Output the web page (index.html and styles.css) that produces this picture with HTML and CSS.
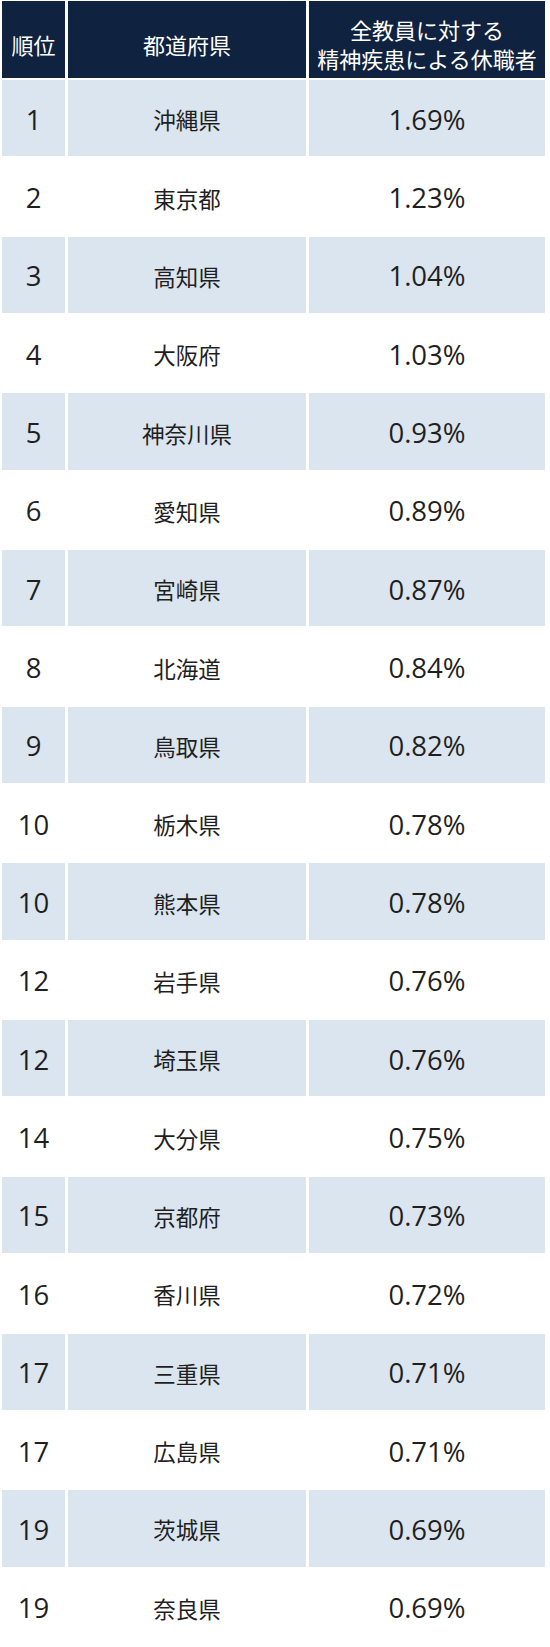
FILE: index.html
```html
<!DOCTYPE html>
<html lang="ja">
<head>
<meta charset="utf-8">
<title>精神疾患による休職者</title>
<link rel="stylesheet" href="styles.css">
</head>
<body>
<div class="table">
  <div class="row head">
    <div class="cell">順位</div>
    <div class="cell">都道府県</div>
    <div class="cell">全教員に対する<br>精神疾患による休職者</div>
  </div>
  <div class="row"><div class="cell num">1</div><div class="cell jp">沖縄県</div><div class="cell num">1.69%</div></div>
  <div class="row"><div class="cell num">2</div><div class="cell jp">東京都</div><div class="cell num">1.23%</div></div>
  <div class="row"><div class="cell num">3</div><div class="cell jp">高知県</div><div class="cell num">1.04%</div></div>
  <div class="row"><div class="cell num">4</div><div class="cell jp">大阪府</div><div class="cell num">1.03%</div></div>
  <div class="row"><div class="cell num">5</div><div class="cell jp">神奈川県</div><div class="cell num">0.93%</div></div>
  <div class="row"><div class="cell num">6</div><div class="cell jp">愛知県</div><div class="cell num">0.89%</div></div>
  <div class="row"><div class="cell num">7</div><div class="cell jp">宮崎県</div><div class="cell num">0.87%</div></div>
  <div class="row"><div class="cell num">8</div><div class="cell jp">北海道</div><div class="cell num">0.84%</div></div>
  <div class="row"><div class="cell num">9</div><div class="cell jp">鳥取県</div><div class="cell num">0.82%</div></div>
  <div class="row"><div class="cell num">10</div><div class="cell jp">栃木県</div><div class="cell num">0.78%</div></div>
  <div class="row"><div class="cell num">10</div><div class="cell jp">熊本県</div><div class="cell num">0.78%</div></div>
  <div class="row"><div class="cell num">12</div><div class="cell jp">岩手県</div><div class="cell num">0.76%</div></div>
  <div class="row"><div class="cell num">12</div><div class="cell jp">埼玉県</div><div class="cell num">0.76%</div></div>
  <div class="row"><div class="cell num">14</div><div class="cell jp">大分県</div><div class="cell num">0.75%</div></div>
  <div class="row"><div class="cell num">15</div><div class="cell jp">京都府</div><div class="cell num">0.73%</div></div>
  <div class="row"><div class="cell num">16</div><div class="cell jp">香川県</div><div class="cell num">0.72%</div></div>
  <div class="row"><div class="cell num">17</div><div class="cell jp">三重県</div><div class="cell num">0.71%</div></div>
  <div class="row"><div class="cell num">17</div><div class="cell jp">広島県</div><div class="cell num">0.71%</div></div>
  <div class="row"><div class="cell num">19</div><div class="cell jp">茨城県</div><div class="cell num">0.69%</div></div>
  <div class="row"><div class="cell num">19</div><div class="cell jp">奈良県</div><div class="cell num">0.69%</div></div>
</div>
</body>
</html>
```
FILE: styles.css
```css
html, body {
  margin: 0;
  padding: 0;
  background: #ffffff;
}
.table {
  display: flex;
  flex-direction: column;
  gap: 2px;
  padding: 1px 5px 0 2px;
  font-family: "Noto Sans CJK JP", sans-serif;
  color: #1f1f1f;
}
.row {
  display: grid;
  grid-template-columns: 63px 238px 236px;
  column-gap: 3px;
  height: 76.35px;
}
.row.head {
  height: 77px;
}
.row:nth-child(even) .cell {
  background: #dbe5f0;
}
.cell {
  display: flex;
  align-items: center;
  justify-content: center;
  text-align: center;
}
.head .cell {
  background: #0f223f;
  color: #ffffff;
  font-size: 22px;
  line-height: 29px;
  padding-top: 9px;
  box-sizing: border-box;
}
.jp {
  font-size: 22.5px;
  padding-top: 2px;
}
.num {
  font-family: "Open Sans", sans-serif;
  font-size: 27.5px;
  padding-top: 2px;
}
```
